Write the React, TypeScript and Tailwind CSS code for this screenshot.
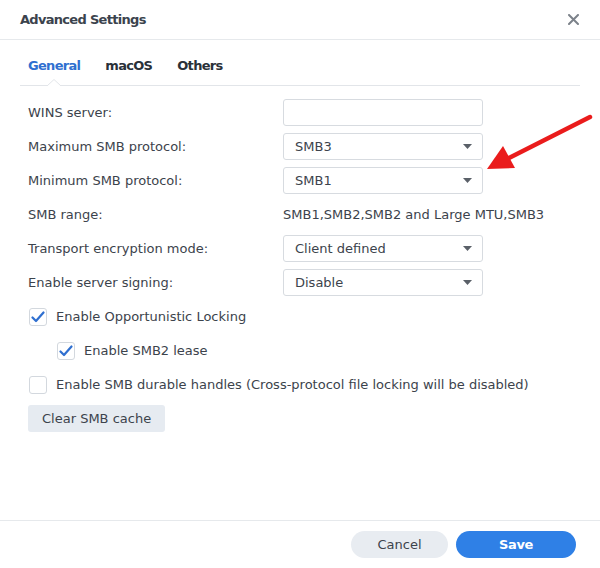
import React from "react";

const font = { fontFamily: '"DejaVu Sans", Verdana, sans-serif' };

function Caret() {
  return (
    <svg width="9" height="5" viewBox="0 0 9 5" className="shrink-0">
      <path d="M0 0 H9 L4.5 5 Z" fill="#5a6068" />
    </svg>
  );
}

function Select({ value }: { value: string }) {
  return (
    <div className="w-[200px] h-[27px] border border-[#d7dbe0] rounded-[3px] bg-white flex items-center justify-between pl-[11px] pr-[10px] text-[#3c434c]">
      <span>{value}</span>
      <Caret />
    </div>
  );
}

function Row({ label, children }: { label: string; children: React.ReactNode }) {
  return (
    <div className="flex items-center h-[27px]">
      <div className="w-[255px] text-[#3c434c]">{label}</div>
      {children}
    </div>
  );
}

function Check({ checked }: { checked: boolean }) {
  return (
    <div className="w-[18px] h-[18px] border border-[#d3d8de] rounded-[3px] bg-white flex items-center justify-center shrink-0">
      {checked && (
        <svg width="14" height="12" viewBox="0 0 14 12">
          <path d="M1.5 6.5 L5 10 L12.5 1.5" fill="none" stroke="#2f6fd0" strokeWidth="2.2" strokeLinecap="round" strokeLinejoin="round" />
        </svg>
      )}
    </div>
  );
}

export default function App() {
  return (
    <div className="relative w-[600px] h-[568px] bg-white flex flex-col text-[13px] overflow-hidden" style={font}>
      {/* Header */}
      <div className="h-[40px] border-b border-[#e6e9ec] flex items-center justify-between pl-[20px] pr-[21px] shrink-0">
        <div className="font-bold text-[#3b434d] text-[13px] tracking-[-0.7px]">Advanced Settings</div>
        <svg width="11" height="11" viewBox="0 0 11 11">
          <path d="M1 1 L10 10 M10 1 L1 10" stroke="#7c828a" strokeWidth="2" strokeLinecap="round" />
        </svg>
      </div>

      {/* Body */}
      <div className="flex-1 flex flex-col">
        <div className="relative mx-[20px] pt-[18px] pb-[11px] border-b border-[#e2e5e9] flex gap-[25px] pl-[8px] font-bold leading-[16px] tracking-[-0.7px]">
          <span className="text-[#2f6fd0]">General</span>
          <span className="text-[#2a3139]">macOS</span>
          <span className="text-[#2a3139]">Others</span>
          <svg className="absolute left-[27px] bottom-[-1px]" width="14" height="7" viewBox="0 0 14 7">
            <path d="M0 7 L7 0.5 L14 7" fill="white" stroke="#e2e5e9" strokeWidth="1" />
          </svg>
        </div>

        <div className="pl-[28px] pt-[13px] flex flex-col gap-[7px]">
          <Row label="WINS server:">
            <div className="w-[200px] h-[27px] border border-[#d7dbe0] rounded-[3px] bg-white" />
          </Row>
          <Row label="Maximum SMB protocol:">
            <Select value="SMB3" />
          </Row>
          <Row label="Minimum SMB protocol:">
            <Select value="SMB1" />
          </Row>
          <Row label="SMB range:">
            <span className="text-[#3c434c]">SMB1,SMB2,SMB2 and Large MTU,SMB3</span>
          </Row>
          <Row label="Transport encryption mode:">
            <Select value="Client defined" />
          </Row>
          <Row label="Enable server signing:">
            <Select value="Disable" />
          </Row>

          <div className="flex items-center h-[27px] gap-[9px] pl-[1px] text-[#3c434c]">
            <Check checked />
            <span>Enable Opportunistic Locking</span>
          </div>
          <div className="flex items-center h-[27px] gap-[9px] pl-[29px] text-[#3c434c]">
            <Check checked />
            <span>Enable SMB2 lease</span>
          </div>
          <div className="flex items-center h-[27px] gap-[9px] pl-[1px] text-[#3c434c]">
            <Check checked={false} />
            <span>Enable SMB durable handles (Cross-protocol file locking will be disabled)</span>
          </div>
          <div>
            <button className="h-[27px] px-[14px] rounded-[3px] bg-[#e6ebf1] text-[#3c434c]">Clear SMB cache</button>
          </div>
        </div>
      </div>

      {/* Footer */}
      <div className="h-[48px] border-t border-[#e6e9ec] flex items-start justify-end gap-[8px] pr-[24px] pt-[10px] shrink-0">
        <button className="w-[97px] h-[27px] rounded-full bg-[#e8ecf1] text-[#3c434c]">Cancel</button>
        <button className="w-[120px] h-[27px] rounded-full bg-[#2f80e6] text-white font-bold tracking-[-0.4px]">Save</button>
      </div>

      {/* Red arrow annotation */}
      <svg className="absolute left-0 top-0 pointer-events-none" width="600" height="568" viewBox="0 0 600 568">
        <path d="M590 117 L505 160" stroke="#ea1c1c" strokeWidth="4.5" strokeLinecap="round" />
        <path d="M487 169 L503 146 L515 168 Z" fill="#ea1c1c" />
      </svg>
    </div>
  );
}
